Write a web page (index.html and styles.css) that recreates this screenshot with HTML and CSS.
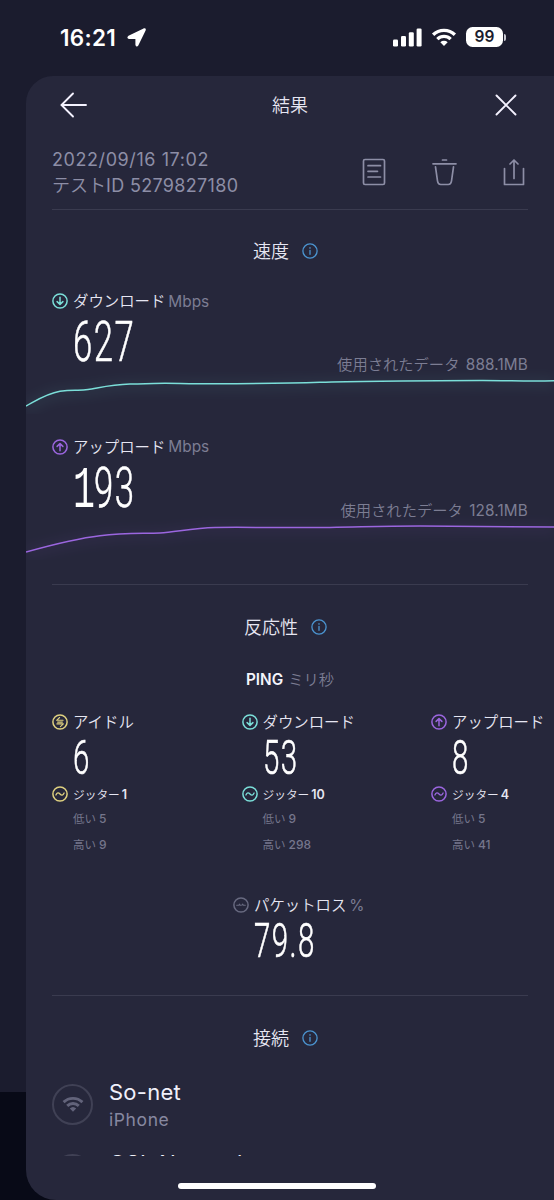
FILE: index.html
```
<!DOCTYPE html>
<html lang="ja">
<head>
<meta charset="utf-8">
<title>結果</title>
<link rel="stylesheet" href="styles.css">
</head>
<body>
<svg class="defs" width="0" height="0" aria-hidden="true">
  <symbol id="down" viewBox="0 0 16 16"><circle cx="8" cy="8" r="7.1"/><path d="M8 4.3v7M5.1 8.6L8 11.4l2.9-2.8"/></symbol>
  <symbol id="up" viewBox="0 0 16 16"><circle cx="8" cy="8" r="7.1"/><path d="M8 11.7v-7M5.1 7.4L8 4.6l2.9 2.8"/></symbol>
  <symbol id="idle" viewBox="0 0 16 16"><circle cx="8" cy="8" r="7.1"/><path stroke-width="1.1" d="M7.600 3.500L4.600 6.300h6.500M5.600 8.100h4.800M4.900 9.900h6.500L8.400 12.600"/></symbol>
  <symbol id="jitter" viewBox="0 0 16 16"><circle cx="8" cy="8" r="7.1"/><path stroke-width="1.300" d="M3.900 9C5 6.200 6.600 6.400 8 8s3 1.800 4.100-1"/></symbol>
  <symbol id="loss" viewBox="0 0 16 16"><circle cx="8" cy="8" r="7.1"/><path stroke-width="1.100" d="M3.700 8.300h2l1-1.100.600 1.200M8.800 8.300l.8-1.200.8 1.100h1.900"/></symbol>
  <symbol id="info" viewBox="0 0 16 16"><circle cx="8" cy="8" r="7.100"/><path d="M8 7.300v4M8 4.600v.6"/></symbol>
  <symbol id="wifi" viewBox="0 0 24 18"><path d="M.6 5.300a16.400 16.400 0 0 1 22.800 0l-2.200 2.300a13.200 13.200 0 0 0-18.400 0zM4.600 9.400a10.600 10.600 0 0 1 14.800 0l-2.200 2.300a7.400 7.400 0 0 0-10.400 0zM8.500 13.400a5.100 5.100 0 0 1 7 0L12 17z"/></symbol>
</svg>

<header class="status">
  <span class="time">16:21</span>
  <svg class="locate" width="19" height="19" viewBox="0 0 19 19"><path d="M17 1.200Q18.200.800 17.800 2L10.600 16.900Q9.600 18.300 9.300 16.600V10.200H2.200Q.6 9.800 1.900 8.600z"/></svg>
  <svg class="signal" width="29" height="19" viewBox="0 0 29 19"><rect x="0" y="11.500" width="5" height="7" rx="1.300"/><rect x="8" y="8" width="5" height="10.500" rx="1.300"/><rect x="15.800" y="4.300" width="5" height="14.200" rx="1.300"/><rect x="23.600" y=".5" width="5" height="18" rx="1.300"/></svg>
  <svg class="wifi" width="26" height="19"><use href="#wifi"/></svg>
  <span class="battery">99</span><i class="cap"></i>
</header>

<main class="panel">
  <nav class="nav">
    <svg class="line" width="28" height="26" viewBox="0 0 28 26"><path d="M26 13H1.800M13 1.500L1.500 13 13 24.500"/></svg>
    <h1>結果</h1>
    <svg class="line" width="22" height="22" viewBox="0 0 22 22"><path d="M1.500 1.500l19 19M20.500 1.500l-19 19"/></svg>
  </nav>

  <section class="meta">
    <p><span class="date">2022/09/16 17:02</span><br>テスト<span class="testid">ID 5279827180</span></p>
    <div class="tools">
      <svg width="24" height="28" viewBox="0 0 24 28"><rect x="1.500" y="1.500" width="21" height="25" rx="1.500"/><path d="M6 7.700h12.500M6 13.300h9.500M6 19h12.500"/></svg>
      <svg width="25" height="28" viewBox="0 0 25 28"><path d="M1 5.800h23M10.500 2h4M3.500 8.800l2 14.200q.5 3.500 3.200 3.500h7.600q2.700 0 3.200-3.500l2-14.200"/></svg>
      <svg width="22" height="28" viewBox="0 0 22 28"><path d="M1.500 10.500v16h19v-16M11 20.500V2M7 6L11 2l4 4"/></svg>
    </div>
  </section>

  <section class="speed">
    <h2>速度<svg class="ic info"><use href="#info"/></svg></h2>
    <article class="rate">
      <div class="label"><svg class="ic teal"><use href="#down"/></svg>ダウンロード<small>Mbps</small></div>
      <div class="value"><b class="num big">627</b><span class="used">使用されたデータ <i>888.1MB</i></span></div>
      <svg class="chart teal" width="528" height="48" viewBox="26 366 528 48"><path class="glow" d="M26 408C38 401 47 395 60 393.500S80 392 90 390.500S115 386 130 386S190 385 210 385.500S290 385 320 384S450 382.500 480 382.300S530 383 554 382.700"/><path d="M26 406C38 399.500 47 393.500 60 391.300S78 391 88 389.600S110 384.700 130 384.100S155 383.300 165 383.300S195 383.900 215 383.800S290 383.200 320 382.200S450 380.500 480 380.400S525 381.500 554 380.700"/></svg>
    </article>
    <article class="rate">
      <div class="label"><svg class="ic purple"><use href="#up"/></svg>アップロード<small>Mbps</small></div>
      <div class="value"><b class="num big"><span class="one">1</span>93</b><span class="used">使用されたデータ <i>128.1MB</i></span></div>
      <svg class="chart purple" width="528" height="48" viewBox="26 511.500 528 48"><path class="glow" d="M26 553C44 548 75 540 100 537S145 535 160 534S195 529 215 529S295 529 330 529S380 527.700 420 527.700S520 528 554 528.500"/><path d="M26 551.500C44 546.500 75 538 100 535.200S145 533.200 160 532.400S193 527.500 215 527S295 527.400 330 526.900S380 525.700 420 525.600S520 526.600 554 526.500"/></svg>
    </article>
  </section>

  <section class="latency">
    <h2>反応性<svg class="ic info"><use href="#info"/></svg></h2>
    <h3><b>PING</b> ミリ秒</h3>
    <div class="grid">
      <article>
        <div class="label"><svg class="ic yellow"><use href="#idle"/></svg>アイドル</div>
        <b class="num">6</b>
        <div class="label jit"><svg class="ic yellow"><use href="#jitter"/></svg>ジッター<b>1</b></div>
        <p>低い<b>5</b></p><p>高い<b>9</b></p>
      </article>
      <article>
        <div class="label"><svg class="ic teal"><use href="#down"/></svg>ダウンロード</div>
        <b class="num">53</b>
        <div class="label jit"><svg class="ic teal"><use href="#jitter"/></svg>ジッター<b>10</b></div>
        <p>低い<b>9</b></p><p>高い<b>298</b></p>
      </article>
      <article>
        <div class="label"><svg class="ic purple"><use href="#up"/></svg>アップロード</div>
        <b class="num">8</b>
        <div class="label jit"><svg class="ic purple"><use href="#jitter"/></svg>ジッター<b>4</b></div>
        <p>低い<b>5</b></p><p>高い<b>41</b></p>
      </article>
    </div>
    <article class="loss">
      <div class="label"><svg class="ic gray"><use href="#loss"/></svg>パケットロス<small>%</small></div>
      <b class="num">79.8</b>
    </article>
  </section>

  <section class="connection">
    <h2>接続<svg class="ic info"><use href="#info"/></svg></h2>
    <div class="item">
      <span class="badge"><svg width="22" height="17" viewBox="0 0 24 18"><use href="#wifi" width="24" height="18"/></svg></span>
      <div><strong>So-net</strong><em>iPhone</em></div>
    </div>
    <div class="item">
      <span class="badge"></span>
      <div><strong>GSL Networks</strong></div>
    </div>
  </section>
  <i class="home"></i>
</main>
</body>
</html>
```
FILE: styles.css
```
* { box-sizing: border-box; margin: 0; padding: 0; }
body {
  width: 554px; height: 1200px; overflow: hidden;
  background: linear-gradient(#1b1c2e 0 1092px, #080a17 1092px);
  font-family: Inter, "Noto Sans CJK JP", sans-serif;
  color: #e6e6f2;
}
i, em { font-style: normal; }
svg { display: block; flex: none; }
.defs { position: absolute; }

.status { height: 76px; display: flex; align-items: center; padding: 0 48px 2px 60px; color: #fff; }
.status svg { fill: #fff; }
.time { width: 67px; font-size: 22.500px; font-weight: 600; letter-spacing: .3px; }
.status .locate { stroke: #fff; stroke-width: 1.800; stroke-linejoin: round; }
.signal { margin-left: auto; }
.wifi { margin: 0 9px 0 9px; }
.battery { width: 37px; height: 20px; border-radius: 6.500px; background: #fff; color: #1b1c2e; font-size: 15.500px; font-weight: 600; line-height: 20px; text-align: center; }
.cap { width: 2px; height: 7px; margin-left: 1px; border-radius: 0 2px 2px 0; background: #c9c9d2; }

.panel { position: relative; height: 1124px; margin-left: 26px; border-radius: 27px 0 0 30px; background: #26273b; overflow: hidden; }
.nav { height: 58px; padding: 0 37px 0 34px; display: flex; align-items: center; justify-content: space-between; }
.nav h1 { font-size: 18px; font-weight: 350; padding: 0 3px 2px 0; }
.line { fill: none; stroke: #f4f2ff; stroke-width: 1.900; stroke-linecap: round; }

.meta { height: 76px; margin: 0 26px; padding-top: 13px; display: flex; justify-content: space-between; border-bottom: 1px solid #3a3b4f; color: #8d8ea6; }
.meta p { font-size: 18px; line-height: 26px; font-weight: 350; }
.date { font-weight: 400; letter-spacing: .58px; }
.testid { font-weight: 400; letter-spacing: .33px; }
.tools { display: flex; gap: 46px; padding: 11px 3px 0 0; height: 39px; }
.tools svg { fill: none; stroke: #8d8ea6; stroke-width: 1.700; stroke-linecap: round; stroke-linejoin: round; }

h2 { height: 40px; padding: 0 9px 2px 0; display: flex; align-items: center; justify-content: center; gap: 13px; font-size: 18px; font-weight: 350; }
h2 .ic { margin-top: 2px; }
.ic { width: 16px; height: 16px; fill: none; stroke: currentColor; stroke-width: 1.500; stroke-linecap: round; stroke-linejoin: round; }
.info { color: #4b94d0; stroke-width: 1.300; }
.teal { color: #7bdfd9; }
.purple { color: #9b66df; }
.yellow { color: #dfd180; }
.gray { color: #686a80; }
.label { height: 22px; padding-bottom: 2px; display: flex; align-items: center; font-size: 15.400px; font-weight: 350; white-space: nowrap; }
.label > * { margin-top: 2px; }
.label .ic { margin-right: 5px; }
.label small { margin-left: 3px; font-size: 15.400px; color: #7c7d93; font-weight: 400; }
.num { display: block; width: max-content; height: 50px; margin-left: 21px; font: 300 47.500px/51px Roboto, sans-serif; letter-spacing: 2.300px; color: #fff; transform: scaleX(.62); transform-origin: left; -webkit-text-stroke: .6px #fff; }
.num.big { height: 60px; font-size: 56px; line-height: 60px; letter-spacing: 2.500px; }
.one { font-family: "Liberation Mono", monospace; font-size: 59px; line-height: 50px; letter-spacing: -1.500px; -webkit-text-stroke: 0; }

.speed { height: 375px; padding-top: 21px; border-bottom: 1px solid #3a3b4f; margin: 0 26px; }
.rate { height: 145.500px; margin-right: -26px; }
.speed h2 + .rate { margin-top: 19px; }
.value { position: relative; height: 54px; display: flex; justify-content: space-between; align-items: flex-start; margin-right: 26px; }
.used { font-size: 15.300px; line-height: 20px; padding-top: 43px; font-weight: 350; color: #7c7d93; white-space: nowrap; }
.used i { margin-left: 2px; font-weight: 400; letter-spacing: .15px; }
.chart { margin-left: -26px; fill: none; stroke: currentColor; stroke-width: 1.500; }
.chart .glow { stroke-width: 12; opacity: .06; filter: blur(6px); }

.latency { height: 411px; margin: 0 26px; padding-top: 22px; border-bottom: 1px solid #3a3b4f; }
h3 { height: 22px; margin-top: 21px; padding-bottom: 2px; display: flex; align-items: center; justify-content: center; gap: 5px; font-size: 15.300px; font-weight: 350; color: #7c7d93; }
h3 b { margin-top: 2px; font-weight: 600; color: #f4f4fb; }
.grid { display: grid; grid-template-columns: repeat(3, 189.500px); margin-top: 21px; }
.jit { font-size: 11.700px; }
.jit b { margin-left: 2px; font-size: 12.500px; font-weight: 600; }
.grid p { height: 25.500px; line-height: 27px; margin-left: 21px; font-size: 11.500px; color: #75768c; }
.grid p b { margin-left: 3px; font-size: 12px; font-weight: 500; }
.loss { width: max-content; margin: 38px 0 0 181px; }

.connection { height: 160px; padding: 22px 26px 0; overflow: hidden; }
.item { display: flex; gap: 16px; height: 69.500px; }
.connection h2 + .item { margin-top: 26px; }
.badge { width: 41px; height: 41px; border: 2px solid #404155; border-radius: 50%; display: grid; place-items: center; fill: #62637a; }
strong, em { display: block; }
strong { font-size: 22px; line-height: 26px; margin-top: -5px; font-weight: 400; letter-spacing: .25px; color: #f0f0fa; white-space: nowrap; }
.item + .item strong { margin-top: -4px; }
em { font-size: 17.500px; line-height: 24px; margin-top: 3px; font-weight: 400; letter-spacing: .6px; color: #8788a0; }
.home { position: absolute; left: 152px; top: 1107px; width: 198px; height: 6px; border-radius: 3px; background: #fff; }
```
